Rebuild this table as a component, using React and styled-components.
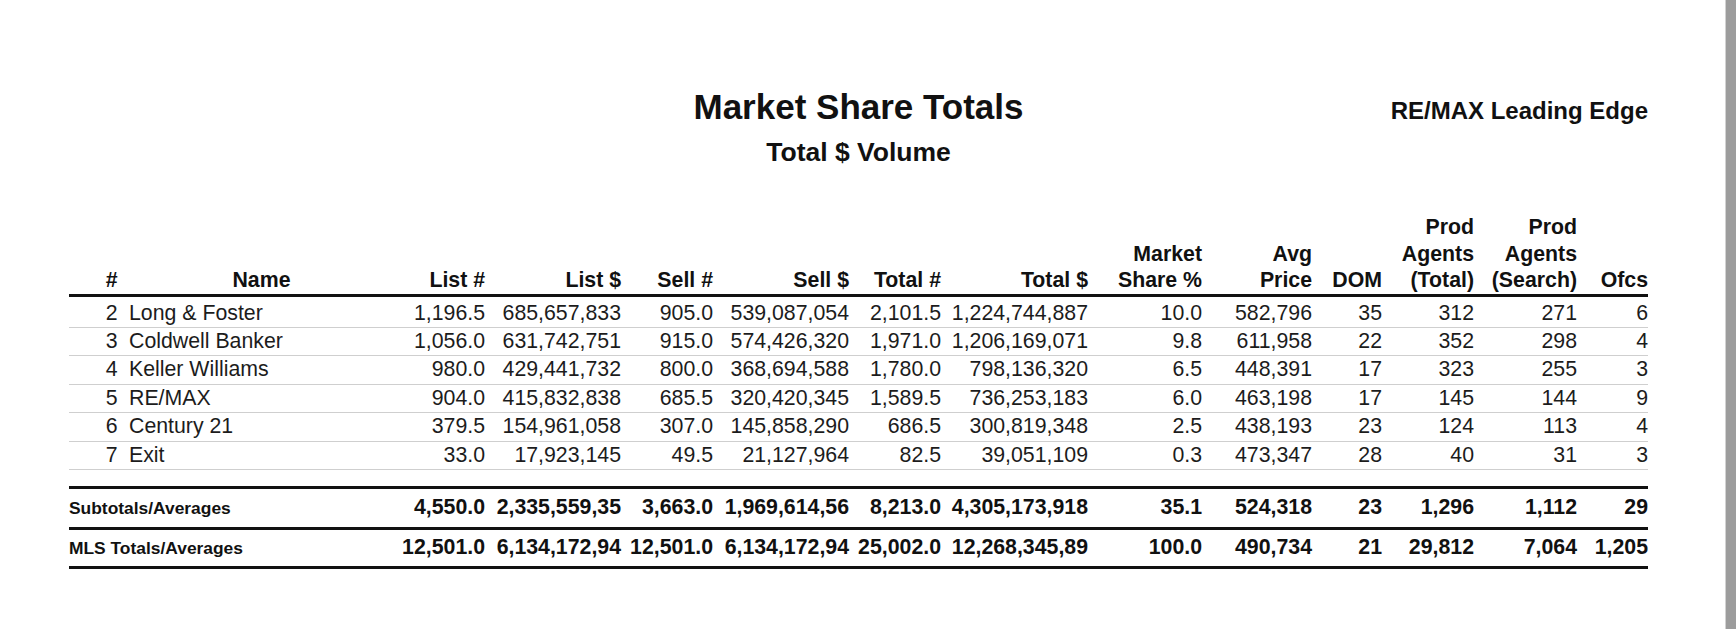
import React from "react";
import styled, { createGlobalStyle } from "styled-components";

const GlobalStyle = createGlobalStyle`
  html, body {
    margin: 0;
    padding: 0;
    background: #fff;
  }
  body {
    font-family: "Liberation Sans", Arial, sans-serif;
    color: #111;
  }
`;

const columns = [
  { label: ["#"], width: 60, head: "right", body: "right", pad: 11.5 },
  { label: ["Name"], width: 265, head: "center", body: "left" },
  { label: ["List #"], width: 91 },
  { label: ["List $"], width: 136 },
  { label: ["Sell #"], width: 92 },
  { label: ["Sell $"], width: 136 },
  { label: ["Total #"], width: 92 },
  { label: ["Total $"], width: 147 },
  { label: ["Market", "Share %"], width: 114 },
  { label: ["Avg", "Price"], width: 110 },
  { label: ["DOM"], width: 70 },
  { label: ["Prod", "Agents", "(Total)"], width: 92 },
  { label: ["Prod", "Agents", "(Search)"], width: 103 },
  { label: ["Ofcs"], width: 71 },
];

const offices = [
  ["2", "Long & Foster", "1,196.5", "685,657,833", "905.0", "539,087,054", "2,101.5", "1,224,744,887", "10.0", "582,796", "35", "312", "271", "6"],
  ["3", "Coldwell Banker", "1,056.0", "631,742,751", "915.0", "574,426,320", "1,971.0", "1,206,169,071", "9.8", "611,958", "22", "352", "298", "4"],
  ["4", "Keller Williams", "980.0", "429,441,732", "800.0", "368,694,588", "1,780.0", "798,136,320", "6.5", "448,391", "17", "323", "255", "3"],
  ["5", "RE/MAX", "904.0", "415,832,838", "685.5", "320,420,345", "1,589.5", "736,253,183", "6.0", "463,198", "17", "145", "144", "9"],
  ["6", "Century 21", "379.5", "154,961,058", "307.0", "145,858,290", "686.5", "300,819,348", "2.5", "438,193", "23", "124", "113", "4"],
  ["7", "Exit", "33.0", "17,923,145", "49.5", "21,127,964", "82.5", "39,051,109", "0.3", "473,347", "28", "40", "31", "3"],
];

const totals = [
  {
    label: "Subtotals/Averages",
    height: 37,
    values: ["4,550.0", "2,335,559,35", "3,663.0", "1,969,614,56", "8,213.0", "4,305,173,918", "35.1", "524,318", "23", "1,296", "1,112", "29"],
  },
  {
    label: "MLS Totals/Averages",
    height: 34.5,
    values: ["12,501.0", "6,134,172,94", "12,501.0", "6,134,172,94", "25,002.0", "12,268,345,89", "100.0", "490,734", "21", "29,812", "7,064", "1,205"],
  },
];

function MarketShare() {
  return (
    <Page>
      <GlobalStyle />
      <Sheet>
        <Heading>
          <span />
          <TitleBlock>
            <Title>Market Share Totals</Title>
            <Subtitle>Total $ Volume</Subtitle>
          </TitleBlock>
          <Company>RE/MAX Leading Edge</Company>
        </Heading>

        <Table>
          <colgroup>
            {columns.map((c, i) => (
              <Col key={i} $w={c.width} />
            ))}
          </colgroup>
          <thead>
            <tr>
              {columns.map((c, i) => (
                <Th key={i} $align={c.head || "right"} $pad={c.pad || 0}>
                  {c.label.map((line, j) => (
                    <React.Fragment key={j}>
                      {j > 0 && <br />}
                      {line}
                    </React.Fragment>
                  ))}
                </Th>
              ))}
            </tr>
          </thead>
          <tbody>
            {offices.map((row, r) => (
              <tr key={r}>
                {row.map((val, i) => (
                  <Td
                    key={i}
                    $align={columns[i].body || "right"}
                    $pad={columns[i].pad || 0}
                    $first={r === 0}
                  >
                    {val}
                  </Td>
                ))}
              </tr>
            ))}
            <tr>
              <Spacer colSpan={columns.length} />
            </tr>
            {totals.map((t, r) => (
              <tr key={t.label}>
                <TotalLabel colSpan={2} $h={t.height} $top={r === 0}>
                  {t.label}
                </TotalLabel>
                {t.values.map((v, i) => (
                  <TotalCell key={i} $h={t.height} $top={r === 0}>
                    {v}
                  </TotalCell>
                ))}
              </tr>
            ))}
          </tbody>
        </Table>
      </Sheet>
      <Strip />
    </Page>
  );
}

const Page = styled.div`
  display: flex;
  min-height: 100vh;
  background: #fff;
`;

const Sheet = styled.div`
  flex: 1;
  padding: 87px 0 0 69px;
`;

const Heading = styled.div`
  width: 1579px;
  display: grid;
  grid-template-columns: 1fr auto 1fr;
  align-items: start;
`;

const TitleBlock = styled.div`
  display: flex;
  flex-direction: column;
  align-items: center;
`;

const Title = styled.h1`
  margin: 0;
  font-size: 35px;
  line-height: 40px;
  font-weight: bold;
  color: #111;
`;

const Subtitle = styled.h2`
  margin: 10px 0 0;
  font-size: 26.5px;
  line-height: 30px;
  font-weight: bold;
  color: #111;
`;

const Company = styled.div`
  justify-self: end;
  margin-top: 4px;
  font-size: 24px;
  line-height: 40px;
  font-weight: bold;
  color: #111;
`;

const Table = styled.table`
  margin-top: 47px;
  width: 1579px;
  table-layout: fixed;
  border-collapse: separate;
  border-spacing: 0;
  font-size: 21.3px;
`;

const Col = styled.col`
  width: ${(p) => p.$w}px;
`;

const Th = styled.th`
  padding: 0 ${(p) => p.$pad}px 0 0;
  text-align: ${(p) => p.$align};
  vertical-align: bottom;
  font-weight: bold;
  line-height: 26.5px;
  white-space: nowrap;
  border-bottom: 3px solid #111;
`;

const Td = styled.td`
  padding: ${(p) => (p.$first ? 3 : 0)}px ${(p) => p.$pad}px 0 0;
  text-align: ${(p) => p.$align};
  vertical-align: bottom;
  line-height: 27.4px;
  white-space: nowrap;
  color: #1c1c1c;
  border-bottom: 1px solid #cfcfcf;
`;

const Spacer = styled.td`
  height: 16.3px;
  padding: 0;
`;

const TotalCell = styled.td`
  padding: 0;
  text-align: right;
  vertical-align: baseline;
  font-weight: bold;
  line-height: ${(p) => p.$h}px;
  white-space: nowrap;
  border-top: ${(p) => (p.$top ? "3px solid #111" : "none")};
  border-bottom: 3px solid #111;
`;

const TotalLabel = styled(TotalCell)`
  text-align: left;
  font-size: 17.4px;
`;

const Strip = styled.div`
  width: 10px;
  flex: none;
  background: #9c9c9c;
  border-left: 1px solid #d2d2d2;
`;

export default MarketShare;
